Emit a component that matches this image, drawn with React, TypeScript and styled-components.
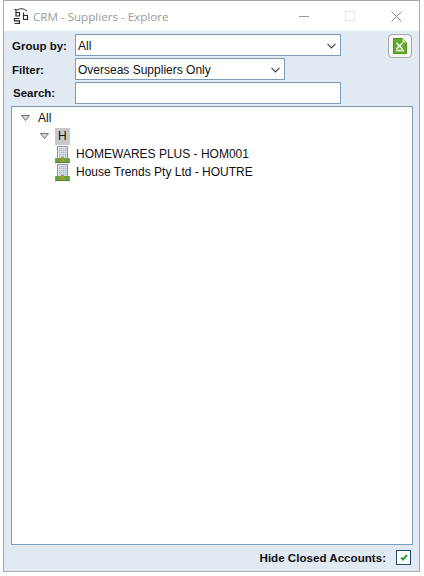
import React from "react";
import styled, { createGlobalStyle } from "styled-components";

const GlobalStyle = createGlobalStyle`
  html, body {
    margin: 0;
    padding: 0;
    background: #fff;
    font-family: "Liberation Sans", Arial, sans-serif;
  }
`;

const Chevron = () => (
  <svg width="9" height="6" viewBox="0 0 9 6" fill="none">
    <path d="M0.5 0.8l4 4 4-4" stroke="#444" strokeWidth="1.2" />
  </svg>
);

const Expander = () => (
  <svg width="9" height="6" viewBox="0 0 9 6">
    <path d="M0.5 0.5h8L4.5 5.5z" fill="#dcdcdc" stroke="#6f6f6f" strokeWidth="1" />
  </svg>
);

const BuildingIcon = () => (
  <svg width="15" height="17" viewBox="0 0 15 17">
    <rect x="2.5" y="0.5" width="10" height="12" fill="#e8edf3" stroke="#8b98a3" />
    {[2, 4, 6, 8, 10].map((y) =>
      [4, 6, 8, 10].map((x) => (
        <rect key={`${x}-${y}`} x={x} y={y} width="1.4" height="1.4" fill="#a3b5c8" />
      ))
    )}
    <rect x="0" y="12" width="6" height="4" rx="1" fill="#6aa23c" />
    <rect x="9" y="12" width="6" height="4" rx="1" fill="#6aa23c" />
    <rect x="6" y="11" width="3" height="5" fill="#c98a2e" />
    <rect x="0" y="16" width="15" height="1" fill="#54812f" />
  </svg>
);

const ExcelIcon = () => (
  <svg width="14" height="16" viewBox="0 0 14 16">
    <path d="M0.5 0.5h9l4 4v11H0.5z" fill="#66aa30" stroke="#53921f" />
    <path d="M9.5 0.5v4h4z" fill="#d6ecc0" />
    <path d="M3.5 5l6 6M9.5 5l-6 6M3 12.5h8" stroke="#fff" strokeWidth="1.4" fill="none" />
  </svg>
);

const AppLogo = () => (
  <svg width="16" height="17" viewBox="0 0 16 17" fill="none" stroke="#2b2b2b" strokeWidth="1.2">
    <path d="M1.5 1.5h1.5v7M3 4.5h3.5v3.5H3" />
    <path d="M10.5 4.5v7.5M10.5 7.5h4v4h-4" />
    <path d="M4 2C7 0.2 11 0.3 14 3" strokeWidth="1" />
    <path d="M6.5 10.5h-5v2.3h5v2.7h-5" />
  </svg>
);

const MinimizeIcon = () => (
  <svg width="10" height="10" viewBox="0 0 10 10">
    <path d="M0 5.5h10" stroke="#999" strokeWidth="1" />
  </svg>
);

const MaximizeIcon = () => (
  <svg width="10" height="10" viewBox="0 0 10 10">
    <rect x="0.5" y="0.5" width="9" height="9" fill="none" stroke="#e3e3e3" />
  </svg>
);

const CloseIcon = () => (
  <svg width="11" height="11" viewBox="0 0 11 11">
    <path d="M0.5 0.5l10 10M10.5 0.5l-10 10" stroke="#888" strokeWidth="1" />
  </svg>
);

const Window = styled.div`
  box-sizing: border-box;
  width: 417px;
  height: 572px;
  margin-left: 3px;
  border: 1px solid #a9a9a9;
  display: flex;
  flex-direction: column;
`;

const TitleBar = styled.div`
  height: 30px;
  flex: none;
  background: #fff;
  display: flex;
  align-items: center;
  padding-left: 9px;
`;

const Title = styled.span`
  margin-left: 4px;
  font-family: "Open Sans", "Noto Sans", sans-serif;
  font-size: 11.6px;
  color: #9a9a9a;
  flex: 1;
`;

const WindowButton = styled.div`
  width: 46px;
  display: flex;
  justify-content: center;
  align-items: center;
`;

const Panel = styled.div`
  flex: 1;
  min-height: 0;
  background: #e1e9f3;
  padding: 3px 6px 0 7px;
  display: flex;
  flex-direction: column;
`;

const Header = styled.div`
  display: flex;
  justify-content: space-between;
  align-items: flex-start;
`;

const Form = styled.div`
  display: grid;
  grid-template-columns: 64px auto;
  row-gap: 2px;
  justify-items: start;
  align-items: center;
`;

const Label = styled.label<{ $indent?: number; $top?: number }>`
  padding-left: ${(p) => p.$indent ?? 1}px;
  padding-top: ${(p) => p.$top ?? 1}px;
  font-size: 11.5px;
  font-weight: 700;
  color: #111;
`;

const Field = styled.div<{ $width: number }>`
  box-sizing: border-box;
  width: ${(p) => p.$width}px;
  height: 22px;
  background: #fff;
  border: 1px solid #7c9cbc;
  display: flex;
  align-items: center;
  justify-content: space-between;
  padding: 1px 4px 0 2px;
  font-size: 12px;
  color: #111;
`;

const ExportButton = styled.div`
  box-sizing: border-box;
  width: 24px;
  height: 24px;
  margin-right: 1px;
  border: 1px solid #a8a8a8;
  border-radius: 4px;
  background: #f4f6f8;
  display: flex;
  align-items: center;
  justify-content: center;
`;

const Tree = styled.div`
  flex: 1;
  min-height: 0;
  margin-top: 2px;
  background: #fff;
  border: 1px solid #7c9cbc;
  padding-top: 2px;
  font-size: 12px;
  color: #111;
`;

const TreeRow = styled.div<{ $indent: number }>`
  height: 18px;
  display: flex;
  align-items: center;
  padding-left: ${(p) => p.$indent}px;
`;

const TreeToggle = styled.span<{ $width: number }>`
  width: ${(p) => p.$width}px;
  display: flex;
  align-items: center;
`;

const GroupLetter = styled.span`
  background: #c8c8c8;
  padding: 0 3px;
  height: 17px;
  line-height: 17px;
`;

const ItemText = styled.span`
  margin-left: 6px;
`;

const Footer = styled.div`
  height: 26px;
  flex: none;
  box-sizing: border-box;
  padding: 0 2px 1px 0;
  display: flex;
  align-items: center;
  justify-content: flex-end;
  gap: 10px;
  font-size: 11.6px;
  font-weight: 700;
  color: #111;
`;

const CheckBox = styled.div`
  box-sizing: border-box;
  width: 15px;
  height: 15px;
  background: #fff;
  border: 1px solid #1f4a6e;
  display: flex;
  align-items: center;
  justify-content: center;
`;

const suppliers = ["HOMEWARES PLUS - HOM001", "House Trends Pty Ltd - HOUTRE"];

export default function App() {
  return (
    <>
      <GlobalStyle />
      <Window>
        <TitleBar>
          <AppLogo />
          <Title>CRM - Suppliers - Explore</Title>
          <WindowButton><MinimizeIcon /></WindowButton>
          <WindowButton><MaximizeIcon /></WindowButton>
          <WindowButton><CloseIcon /></WindowButton>
        </TitleBar>
        <Panel>
          <Header>
            <Form>
              <Label>Group by:</Label>
              <Field $width={266}>All<Chevron /></Field>
              <Label>Filter:</Label>
              <Field $width={210}>Overseas Suppliers Only<Chevron /></Field>
              <Label $indent={2} $top={0}>Search:</Label>
              <Field $width={266} />
            </Form>
            <ExportButton><ExcelIcon /></ExportButton>
          </Header>
          <Tree>
            <TreeRow $indent={9}>
              <TreeToggle $width={17}><Expander /></TreeToggle>
              All
            </TreeRow>
            <TreeRow $indent={28}>
              <TreeToggle $width={15}><Expander /></TreeToggle>
              <GroupLetter>H</GroupLetter>
            </TreeRow>
            {suppliers.map((name) => (
              <TreeRow $indent={43} key={name}>
                <BuildingIcon />
                <ItemText>{name}</ItemText>
              </TreeRow>
            ))}
          </Tree>
          <Footer>
            Hide Closed Accounts:
            <CheckBox>
              <svg width="8" height="7" viewBox="0 0 8 7" fill="none">
                <path d="M1 3.5l2 2L7 1" stroke="#2a9e3a" strokeWidth="1.9" />
              </svg>
            </CheckBox>
          </Footer>
        </Panel>
      </Window>
    </>
  );
}
